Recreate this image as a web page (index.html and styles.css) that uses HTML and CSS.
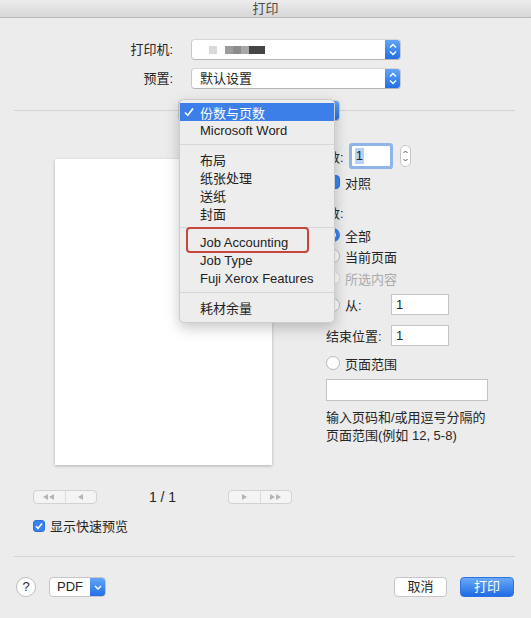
FILE: index.html
```html
<!DOCTYPE html>
<html>
<head>
  <meta charset="utf-8">
  <meta name="viewport" content="width=device-width, initial-scale=1">
  <title>打印</title>
  <link rel="stylesheet" href="styles.css">
</head>
<body>
<div class="window">
  <header class="titlebar">打印</header>

  <section class="setup">
    <span class="setup-label">打印机:</span>
    <div class="popup">
      <span class="blur">
        <i class="px p1"></i><i class="px p2"></i><i class="px p3"></i><i class="px p4"></i><i class="px p5"></i>
      </span>
      <span class="stepper">
        <svg width="16" height="21" viewBox="0 0 16 21"><path d="M5 8.5 L8 5.5 L11 8.5 M5 12.5 L8 15.5 L11 12.5" fill="none" stroke="#fff" stroke-width="1.3"/></svg>
      </span>
    </div>
    <span class="setup-label">预置:</span>
    <div class="popup">
      <span class="popup-text">默认设置</span>
      <span class="stepper">
        <svg width="16" height="21" viewBox="0 0 16 21"><path d="M5 8.5 L8 5.5 L11 8.5 M5 12.5 L8 15.5 L11 12.5" fill="none" stroke="#fff" stroke-width="1.3"/></svg>
      </span>
    </div>
  </section>

  <div class="divider-row">
    <span class="line line-left"></span>
    <!-- panel selector, covered by its open menu -->
    <div class="popup panel-popup">
      <span class="popup-text"></span>
      <span class="stepper"></span>
    </div>
    <span class="line"></span>
  </div>

  <main class="main">
    <div class="preview-col">
      <div class="preview"></div>
      <div class="pager">
        <div class="nav-group">
          <span class="nav-btn">
            <svg width="12" height="6" viewBox="0 0 12 6"><path d="M0 3 L5 0 L5 6 Z M6 3 L11 0 L11 6 Z" fill="#b4b4b4"/></svg>
          </span>
          <span class="nav-btn">
            <svg width="5" height="6" viewBox="0 0 5 6"><path d="M0 3 L5 0 L5 6 Z" fill="#b4b4b4"/></svg>
          </span>
        </div>
        <span class="page-count">1 / 1</span>
        <div class="nav-group">
          <span class="nav-btn">
            <svg width="5" height="6" viewBox="0 0 5 6"><path d="M5 3 L0 0 L0 6 Z" fill="#b4b4b4"/></svg>
          </span>
          <span class="nav-btn">
            <svg width="12" height="6" viewBox="0 0 12 6"><path d="M5 3 L0 0 L0 6 Z M11 3 L6 0 L6 6 Z" fill="#b4b4b4"/></svg>
          </span>
        </div>
      </div>
      <div class="quick">
        <span class="checkbox checked">
          <svg width="12" height="12" viewBox="0 0 12 12"><path d="M3 6.2 L5 8.3 L9 3.6" fill="none" stroke="#fff" stroke-width="1.6"/></svg>
        </span>
        <span>显示快速预览</span>
      </div>
    </div>

    <div class="options-col">
      <div class="copies">
        <span class="label-out">份数:</span>
        <span class="num-focus"><span class="sel">1</span></span>
        <span class="mini-stepper">
          <svg width="11" height="22" viewBox="0 0 11 22"><path d="M3.5 8 L5.5 6 L7.5 8 M3.5 14 L5.5 16 L7.5 14" fill="none" stroke="#555" stroke-width="1"/></svg>
        </span>
      </div>
      <div class="row collate">
        <span class="checkbox checked"></span>
        <span>对照</span>
      </div>
      <div class="row pages-label"><span class="label-out">页数:</span></div>
      <div class="row r-all">
        <span class="radio on"></span><span>全部</span>
      </div>
      <div class="row r-current">
        <span class="radio"></span><span>当前页面</span>
      </div>
      <div class="row r-sel disabled">
        <span class="radio"></span><span>所选内容</span>
      </div>
      <div class="field-row r-from">
        <span class="row"><span class="radio"></span><span>从:</span></span>
        <span class="field">1</span>
      </div>
      <div class="field-row r-to">
        <span>结束位置:</span>
        <span class="field">1</span>
      </div>
      <div class="row r-range">
        <span class="radio"></span><span>页面范围</span>
      </div>
      <div class="field range-field"></div>
      <p class="hint">输入页码和/或用逗号分隔的<br>页面范围(例如 12, 5-8)</p>
    </div>
  </main>

  <div class="footer-sep"></div>
  <footer class="footer">
    <span class="help-btn">?</span>
    <span class="pdf-btn">
      <span class="pdf-text">PDF</span>
      <span class="pdf-arrow">
        <svg width="16" height="20" viewBox="0 0 16 20"><path d="M5 9 L8 12 L11 9" fill="none" stroke="#fff" stroke-width="1.4"/></svg>
      </span>
    </span>
    <span class="spacer"></span>
    <span class="btn">取消</span>
    <span class="btn primary">打印</span>
  </footer>

  <div class="menu">
    <div class="menu-item active">
      <span class="check">
        <svg width="10" height="10" viewBox="0 0 10 10"><path d="M1 5.5 L3.8 8.3 L9 1.5" fill="none" stroke="#fff" stroke-width="1.6"/></svg>
      </span>
      份数与页数
    </div>
    <div class="menu-item"><span class="check"></span>Microsoft Word</div>
    <div class="menu-sep"></div>
    <div class="menu-item"><span class="check"></span>布局</div>
    <div class="menu-item"><span class="check"></span>纸张处理</div>
    <div class="menu-item"><span class="check"></span>送纸</div>
    <div class="menu-item"><span class="check"></span>封面</div>
    <div class="menu-sep"></div>
    <div class="menu-item"><span class="check"></span>Job Accounting</div>
    <div class="menu-item"><span class="check"></span>Job Type</div>
    <div class="menu-item"><span class="check"></span>Fuji Xerox Features</div>
    <div class="menu-sep"></div>
    <div class="menu-item"><span class="check"></span>耗材余量</div>
    <div class="mark"></div>
  </div>
</div>
</body>
</html>
```

FILE: styles.css
```css
body {
  margin: 0;
  background: #ececec;
  font-family: "Liberation Sans", "Noto Sans CJK SC", sans-serif;
  font-size: 13px;
  color: #262626;
}

.window {
  position: relative;
  width: 531px;
  height: 618px;
  overflow: hidden;
}

.titlebar {
  height: 17px;
  line-height: 17px;
  text-align: center;
  color: #4c4c4c;
  background: linear-gradient(#ececec, #d7d7d7);
  border-bottom: 1px solid #b9b9b9;
}

/* printer + preset */
.setup {
  display: grid;
  grid-template-columns: 173px 210px;
  column-gap: 18px;
  row-gap: 8px;
  padding-top: 21px;
}

.setup-label {
  text-align: right;
  line-height: 21px;
}

.popup {
  display: flex;
  height: 21px;
  box-sizing: border-box;
  background: #fff;
  border: 1px solid #c9c9c9;
  border-top-color: #d6d6d6;
  border-bottom-color: #b5b5b5;
  border-radius: 4px;
  overflow: hidden;
}

.popup-text {
  flex: 1;
  line-height: 19px;
  padding-left: 8px;
}

.blur {
  flex: 1;
  display: flex;
  align-items: center;
  padding-left: 17px;
}

.px {
  display: block;
  width: 8px;
  height: 8px;
}
.p1 { background: #dadada; margin-right: 8px; }
.p2 { background: #9c9c9c; }
.p3 { background: #8c8c8c; }
.p4 { background: #a7a7a7; }
.p5 { background: #454545; width: 16px; }

.stepper {
  width: 16px;
  margin: -1px -1px -1px 0;
  background: linear-gradient(#66a8f8, #1f6ce5);
  border-radius: 0 4px 4px 0;
}

.stepper svg {
  display: block;
}

/* panel selector */
.divider-row {
  display: flex;
  align-items: center;
  margin-top: 11px;
  padding: 0 16px 0 14px;
  height: 21px;
}

.line {
  flex: 1;
  border-top: 1px solid #d4d4d4;
}

.line-left {
  flex: none;
  width: 164px;
}

.panel-popup {
  width: 162px;
}

/* main */
.main {
  display: grid;
  grid-template-columns: 259px 1fr;
  column-gap: 34px;
  padding: 0 16px 0 33px;
}

.preview {
  width: 217px;
  height: 306px;
  margin: 38px 0 0 22px;
  background: #fff;
  box-shadow: 0 1px 3px rgba(0, 0, 0, 0.25);
}

.pager {
  display: flex;
  justify-content: space-between;
  align-items: center;
  margin-top: 25px;
  height: 14px;
}

.nav-group {
  display: flex;
  width: 64px;
  height: 14px;
  box-sizing: border-box;
  border: 1px solid #d2d2d2;
  border-radius: 4px;
  background: #f4f4f4;
}

.nav-btn {
  flex: 1;
  display: flex;
  align-items: center;
  justify-content: center;
}

.nav-btn + .nav-btn {
  border-left: 1px solid #dcdcdc;
}

.page-count {
  font-size: 14px;
}

.quick {
  display: flex;
  align-items: center;
  gap: 5px;
  margin-top: 15px;
  height: 13px;
}

.checkbox {
  display: block;
  width: 12px;
  height: 12px;
  box-sizing: border-box;
  border-radius: 3px;
  background: #fff;
  border: 1px solid #b5b5b5;
}

.checkbox.checked {
  background: #3a83f1;
  border-color: #2c6fd8;
}

.checkbox svg {
  display: block;
  margin: -1px;
}

/* options column */
.row {
  display: flex;
  align-items: center;
  gap: 5px;
  height: 18px;
}

.label-out {
  margin-left: -12px;
}

.copies {
  display: flex;
  align-items: center;
  margin-top: 22px;
  height: 26px;
}

.num-focus {
  width: 38px;
  height: 20px;
  margin-left: 8px;
  box-sizing: border-box;
  padding: 2px 3px;
  background: #fff;
  box-shadow: 0 0 0 3px #8fb4ea;
  border-radius: 1px;
}

.sel {
  display: inline-block;
  height: 16px;
  line-height: 16px;
  padding: 0 1px;
  background: #b4d3f7;
}

.mini-stepper {
  width: 11px;
  height: 22px;
  margin-left: 10px;
  box-sizing: border-box;
  border: 1px solid #c5c5c5;
  border-radius: 5px;
  background: #fff;
}

.mini-stepper svg {
  display: block;
  margin: -1px;
}

.collate { margin-top: 4px; }
.collate .checkbox { width: 14px; height: 14px; border-radius: 4px; }
.pages-label { margin-top: 12px; }
.r-all { margin-top: 5px; }
.r-current { margin-top: 3px; }
.r-sel { margin-top: 4px; }
.r-from { margin-top: 7px; }
.r-to { margin-top: 10px; }
.r-range { margin-top: 8px; }

.disabled { color: #ababab; }

.radio {
  display: block;
  width: 14px;
  height: 14px;
  box-sizing: border-box;
  border-radius: 50%;
  background: #fff;
  border: 1px solid #b9b9b9;
}

.disabled .radio {
  border-color: #dcdcdc;
}

.radio.on {
  border: 4.5px solid #3a83f1;
  background: #fff;
}

.field-row {
  display: grid;
  grid-template-columns: 65px 58px;
  align-items: center;
  height: 21px;
}

.field {
  display: block;
  height: 21px;
  box-sizing: border-box;
  border: 1px solid #c3c3c3;
  background: #fff;
  line-height: 19px;
  padding-left: 4px;
}

.range-field {
  width: 162px;
  height: 22px;
  margin-top: 7px;
}

.hint {
  margin: 8px 0 0;
  line-height: 18px;
}

/* footer */
.footer-sep {
  margin: 24px 16px 0 14px;
  border-top: 1px solid #d4d4d4;
}

.footer {
  display: flex;
  align-items: center;
  padding: 20px 17px 0 16px;
  height: 20px;
}

.help-btn {
  width: 20px;
  height: 20px;
  box-sizing: border-box;
  border: 1px solid #bdbdbd;
  border-radius: 50%;
  background: #fff;
  text-align: center;
  line-height: 18px;
  font-size: 13px;
}

.pdf-btn {
  display: flex;
  width: 57px;
  height: 20px;
  margin-left: 13px;
  box-sizing: border-box;
  border: 1px solid #c6c6c6;
  border-radius: 4px;
  background: #fff;
  overflow: hidden;
}

.pdf-text {
  flex: 1;
  text-align: center;
  line-height: 18px;
}

.pdf-arrow {
  width: 16px;
  margin: -1px -1px -1px 0;
  background: linear-gradient(#66a8f8, #1f6ce5);
}

.pdf-arrow svg {
  display: block;
}

.spacer { flex: 1; }

.btn {
  width: 53px;
  height: 20px;
  box-sizing: border-box;
  border: 1px solid #c6c6c6;
  border-radius: 4px;
  background: #fff;
  text-align: center;
  line-height: 18px;
}

.btn.primary {
  width: 54px;
  margin-left: 13px;
  color: #fff;
  border-color: #2d73e0;
  background: linear-gradient(#69a9f8, #1f6be4);
}

/* open popup menu */
.menu {
  position: absolute;
  left: 179px;
  top: 99px;
  width: 156px;
  box-sizing: border-box;
  padding: 3px 0 6px;
  background: #ededed;
  border: 1px solid #cdcdcd;
  border-radius: 5px;
  box-shadow: 0 5px 14px rgba(0, 0, 0, 0.22);
}

.menu-item {
  display: flex;
  align-items: center;
  height: 18px;
  color: #222;
}

.menu-item.active {
  background: #3c7fe8;
  color: #fff;
}

.check {
  width: 16px;
  padding-left: 4px;
  display: flex;
  align-items: center;
}

.check svg { display: block; }

.menu-sep {
  margin: 5px 0;
  border-top: 1px solid #d7d7d7;
}

.mark {
  position: absolute;
  left: 6px;
  top: 127px;
  width: 123px;
  height: 26px;
  box-sizing: border-box;
  border: 2px solid #c8453e;
  border-radius: 4px;
}
```
